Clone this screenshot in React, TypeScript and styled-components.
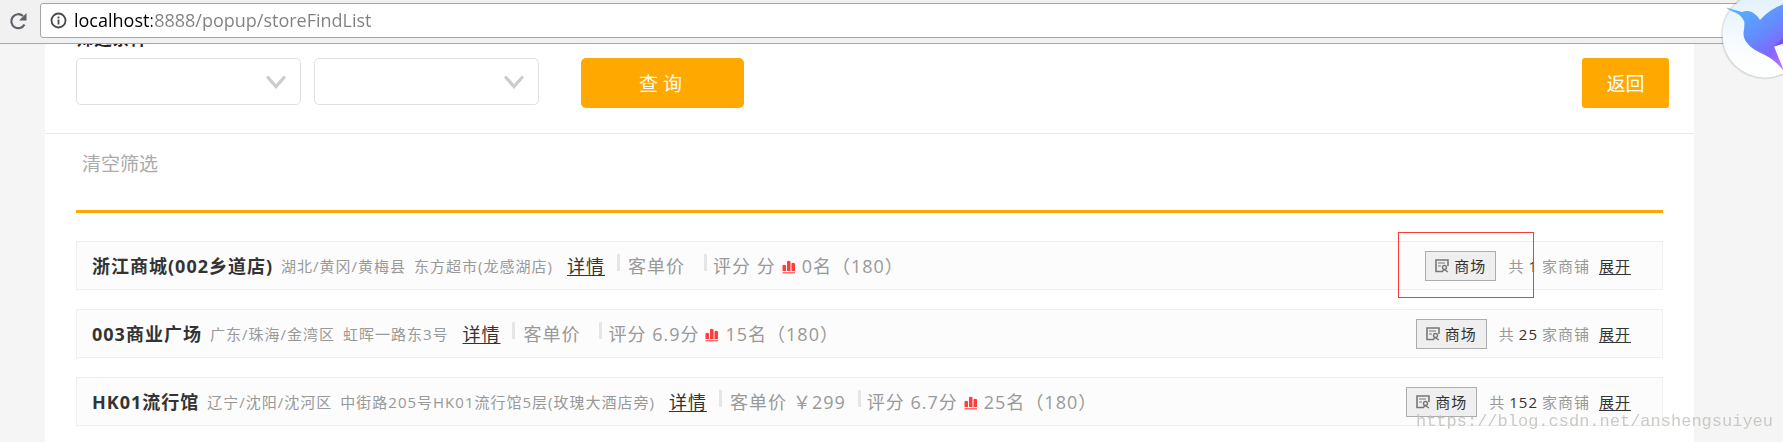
import React from "react";
import styled, { createGlobalStyle } from "styled-components";

const GlobalStyle = createGlobalStyle`
  *, *::before, *::after { box-sizing: border-box; }
  body {
    margin: 0;
    background: #f5f5f5;
    color: #333;
    font-family: "Open Sans", "Noto Sans CJK SC", sans-serif;
    overflow: hidden;
  }
`;

const Browser = styled.div`
  display: flex;
  flex-direction: column;
  min-height: 100vh;
`;

const Toolbar = styled.header`
  display: flex;
  align-items: center;
  gap: 12px;
  height: 44px;
  padding: 0 6px 2px 8px;
  background: #f1f1f1;
  border-bottom: 1px solid #a9a9a9;
`;

const ReloadButton = styled.button`
  display: flex;
  width: 20px;
  height: 20px;
  padding: 0;
  border: 0;
  background: none;
`;

const AddressBar = styled.label`
  display: flex;
  flex: 1;
  align-items: center;
  gap: 7px;
  height: 35px;
  padding: 0 9px;
  background: #fff;
  border: 1px solid #a6a6a6;
  border-radius: 3px;
`;

const AddressInput = styled.input`
  flex: 1;
  height: 30px;
  padding: 0 0 2px;
  border: 0;
  outline: 0;
  font: 18px "Open Sans", sans-serif;
  color: transparent;
  background: linear-gradient(to right, #000 78px, #808080 78px);
  background-clip: text;
  -webkit-background-clip: text;
`;

const Panel = styled.main`
  flex: 1;
  margin: 0 89px 0 45px;
  background: #fff;
`;

const Filters = styled.section`
  padding: 0 25px 25px 31px;
  border-bottom: 1px solid #e8e8e8;
`;

const FilterTitle = styled.h2`
  display: flex;
  align-items: flex-end;
  height: 4px;
  margin: 0 0 10px;
  overflow: hidden;
  font-size: 18px;
  line-height: 20px;
  color: #222;
`;

const FilterBar = styled.div`
  display: flex;
  align-items: flex-start;
  gap: 13px;
`;

const SelectBox = styled.div`
  display: grid;
  width: 225px;
  height: 47px;
  align-items: center;
  & > * { grid-area: 1 / 1; }
  & > svg { justify-self: end; margin-right: 15px; pointer-events: none; }
`;

const Select = styled.select`
  width: 100%;
  height: 100%;
  padding: 0 44px 0 12px;
  appearance: none;
  background: #fff;
  border: 1px solid #e0e0e0;
  border-radius: 5px;
  font: inherit;
`;

const ActionButton = styled.button<{ $wide?: boolean }>`
  width: ${(p) => (p.$wide ? 163 : 87)}px;
  height: 50px;
  margin-left: ${(p) => (p.$wide ? "29px" : "auto")};
  padding: 0 ${(p) => (p.$wide ? 4 : 0)}px 0 0;
  border: 0;
  border-radius: ${(p) => (p.$wide ? 5 : 3)}px;
  background: #ffa800;
  color: #fff;
  font: 19px "Open Sans", "Noto Sans CJK SC", sans-serif;
`;

const Results = styled.section`
  padding: 0 31px 15px;
`;

const ClearBar = styled.div`
  display: flex;
  height: 79px;
  padding: 14px 6px 0;
  border-bottom: 3px solid #ffa800;
`;

const ClearButton = styled.button`
  height: 30px;
  padding: 0;
  border: 0;
  background: none;
  color: #aaa;
  font: 19px "Open Sans", "Noto Sans CJK SC", sans-serif;
`;

const List = styled.ul`
  display: flex;
  flex-direction: column;
  gap: 19px;
  margin: 28px 0 0;
  padding: 0;
  list-style: none;
  letter-spacing: 1px;
`;

const Row = styled.li`
  position: relative;
  display: flex;
  align-items: center;
  justify-content: space-between;
  height: 49px;
  padding: 0 31px 0 15px;
  background: #fcfcfc;
  border: 1px solid #efefef;
  color: #999;
  white-space: nowrap;
`;

const Info = styled.div`
  display: flex;
  align-items: center;
  padding-bottom: 2px;
  font-size: 18px;
`;

const Name = styled.strong`
  font-size: 18px;
  color: #333;
`;

const Address = styled.span`
  display: flex;
  gap: 8px;
  margin: 2px 14px 0 8px;
  font-size: 15px;
`;

const TextLink = styled.a`
  color: #333;
  text-underline-offset: 2px;
`;

const Stat = styled.span<{ $first?: boolean }>`
  display: flex;
  align-items: center;
  gap: 6px;
  margin-left: 12px;
  &::before {
    content: "";
    width: 3px;
    height: 17px;
    margin: 0 ${(p) => (p.$first ? 2 : 0)}px 4px 0;
    background: #e6e6e6;
  }
  & > svg { margin-top: 4px; }
`;

const Value = styled.span`
  min-width: 1px;
`;

const Side = styled.div`
  display: flex;
  align-items: center;
  font-size: 15px;
  & > ${TextLink} { margin-left: 9px; }
`;

const MallButton = styled.button`
  display: flex;
  align-items: center;
  gap: 5px;
  width: 71px;
  height: 30px;
  margin-right: 12px;
  padding: 0 9px;
  background: #efefef;
  border: 1px solid #adadad;
  color: #333;
  font: 15px "Open Sans", "Noto Sans CJK SC", sans-serif;
  letter-spacing: inherit;
`;

const Count = styled.span`
  margin: 0 4px;
  color: #333;
`;

const Highlight = styled.span`
  position: absolute;
  top: -10px;
  right: 128px;
  width: 136px;
  height: 66px;
  border: 1px solid #f93a3a;
  pointer-events: none;
`;

const BirdBadge = styled.svg`
  position: fixed;
  top: 0;
  right: 0;
`;

const Watermark = styled.span`
  position: fixed;
  right: 10px;
  bottom: 10px;
  color: rgba(185, 185, 180, 0.75);
  font: 17px/20px "Liberation Mono", monospace;
  pointer-events: none;
`;

const ReloadIcon = () => (
  <svg width="20" height="20" viewBox="0 0 20 20" fill="none">
    <path d="M16.500 13.500A7 7 0 1 1 15 5" stroke="#5f6368" strokeWidth="2.2" />
    <path d="M18.500 2v7.500H11z" fill="#5f6368" />
  </svg>
);

const InfoIcon = () => (
  <svg width="17" height="17" viewBox="0 0 17 17" fill="none" stroke="#4a4a4a">
    <circle cx="8.500" cy="8.500" r="7" strokeWidth="1.800" />
    <path d="M8.500 7.500v5M8.500 4.500v2" strokeWidth="1.800" />
  </svg>
);

const Chevron = () => (
  <svg width="20" height="14" viewBox="0 0 20 14" fill="none">
    <path d="M2 2.500l8 9 8-9" stroke="#ccc" strokeWidth="3.200" strokeLinecap="round" />
  </svg>
);

const RankIcon = () => (
  <svg width="14" height="14" viewBox="0 0 14 14">
    <path
      d="M0.500 5.500Q2 4 4 5.500V11H0.500zM5 1.500Q6.500 0 8.500 1.500V11H5zM9.500 3.500Q11 2 13 3.500V11H9.500z"
      fill="#ff3d3d"
    />
    <path d="M0.500 12h12.500v1.500H0.500z" fill="#ff7070" />
  </svg>
);

const MallIcon = () => (
  <svg width="14" height="14" viewBox="0 0 14 14" fill="none" stroke="#777">
    <path d="M7 12.500H1V1h12v6" strokeWidth="1.600" />
    <path d="M3 4h7M3 7h3" strokeWidth="1.200" />
    <circle cx="9.500" cy="8.500" r="2" strokeWidth="1.400" />
    <path d="M7 13l2-2.500 4 2.500" strokeWidth="1.400" />
  </svg>
);

const Bird = () => (
  <BirdBadge width="70" height="90" viewBox="1713 0 70 90" aria-hidden="true">
    <defs>
      <linearGradient id="disc" x1="0" y1="0" x2="0" y2="1">
        <stop offset="0" stopColor="#e0f0fc" />
        <stop offset="0.6" stopColor="#f8fbff" />
        <stop offset="1" stopColor="#fff" />
      </linearGradient>
      <linearGradient id="bird" gradientUnits="userSpaceOnUse" x1="1738" y1="10" x2="1782" y2="72">
        <stop offset="0" stopColor="#55b0ff" />
        <stop offset="0.450" stopColor="#6688ff" />
        <stop offset="0.700" stopColor="#8068fc" />
        <stop offset="1" stopColor="#cc70ff" />
      </linearGradient>
    </defs>
    <circle cx="1765" cy="35" r="44.500" fill="#000" opacity="0.06" />
    <circle cx="1765" cy="35" r="43.500" fill="#000" opacity="0.08" />
    <circle cx="1765" cy="35" r="42.500" fill="url(#disc)" />
    <path
      d="M1726 7.500Q1735 10 1742 12Q1747 10 1752 12Q1757 15 1760 20Q1770 9 1784 4V43L1774 46.500L1784 71Q1775 60 1765 55Q1743 46 1743.500 33Q1745 23 1744 21Q1741 15 1736 13Q1729 10 1726 7.500Z"
      fill="url(#bird)"
    />
    <path d="M1774 46.500L1784 37V43.500Z" fill="#7650f8" />
  </BirdBadge>
);

const stores = [
  { name: "浙江商城(002乡道店)", region: "湖北/黄冈/黄梅县", street: "东方超市(龙感湖店)", price: "", score: "分", rank: "0名", shops: 1, marked: true },
  { name: "003商业广场", region: "广东/珠海/金湾区", street: "虹晖一路东3号", price: "", score: "6.9分", rank: "15名", shops: 25 },
  { name: "HK01流行馆", region: "辽宁/沈阳/沈河区", street: "中街路205号HK01流行馆5层(玫瑰大酒店旁)", price: "￥299", score: "6.7分", rank: "25名", shops: 152 },
];

export default function App() {
  return (
    <Browser>
      <GlobalStyle />
      <Toolbar>
        <ReloadButton aria-label="刷新"><ReloadIcon /></ReloadButton>
        <AddressBar>
          <InfoIcon />
          <AddressInput aria-label="地址" defaultValue="localhost:8888/popup/storeFindList" />
        </AddressBar>
      </Toolbar>
      <Panel>
        <Filters>
          <FilterTitle>筛选条件</FilterTitle>
          <FilterBar>
            {["省份", "城市"].map((label) => (
              <SelectBox key={label}>
                <Select aria-label={label} />
                <Chevron />
              </SelectBox>
            ))}
            <ActionButton $wide>查 询</ActionButton>
            <ActionButton>返回</ActionButton>
          </FilterBar>
        </Filters>
        <Results>
          <ClearBar>
            <ClearButton>清空筛选</ClearButton>
          </ClearBar>
          <List>
            {stores.map((s) => (
              <Row key={s.name}>
                <Info>
                  <Name>{s.name}</Name>
                  <Address>
                    <span>{s.region}</span>
                    <span>{s.street}</span>
                  </Address>
                  <TextLink href="#">详情</TextLink>
                  <Stat $first>客单价 <Value>{s.price}</Value></Stat>
                  <Stat>
                    <span>评分 {s.score}</span>
                    <RankIcon />
                    <span>{s.rank}（180）</span>
                  </Stat>
                </Info>
                <Side>
                  <MallButton><MallIcon />商场</MallButton>
                  共<Count>{s.shops}</Count>家商铺
                  <TextLink href="#">展开</TextLink>
                </Side>
                {s.marked && <Highlight />}
              </Row>
            ))}
          </List>
        </Results>
      </Panel>
      <Bird />
      <Watermark>https://blog.csdn.net/anshengsuiyeu</Watermark>
    </Browser>
  );
}
